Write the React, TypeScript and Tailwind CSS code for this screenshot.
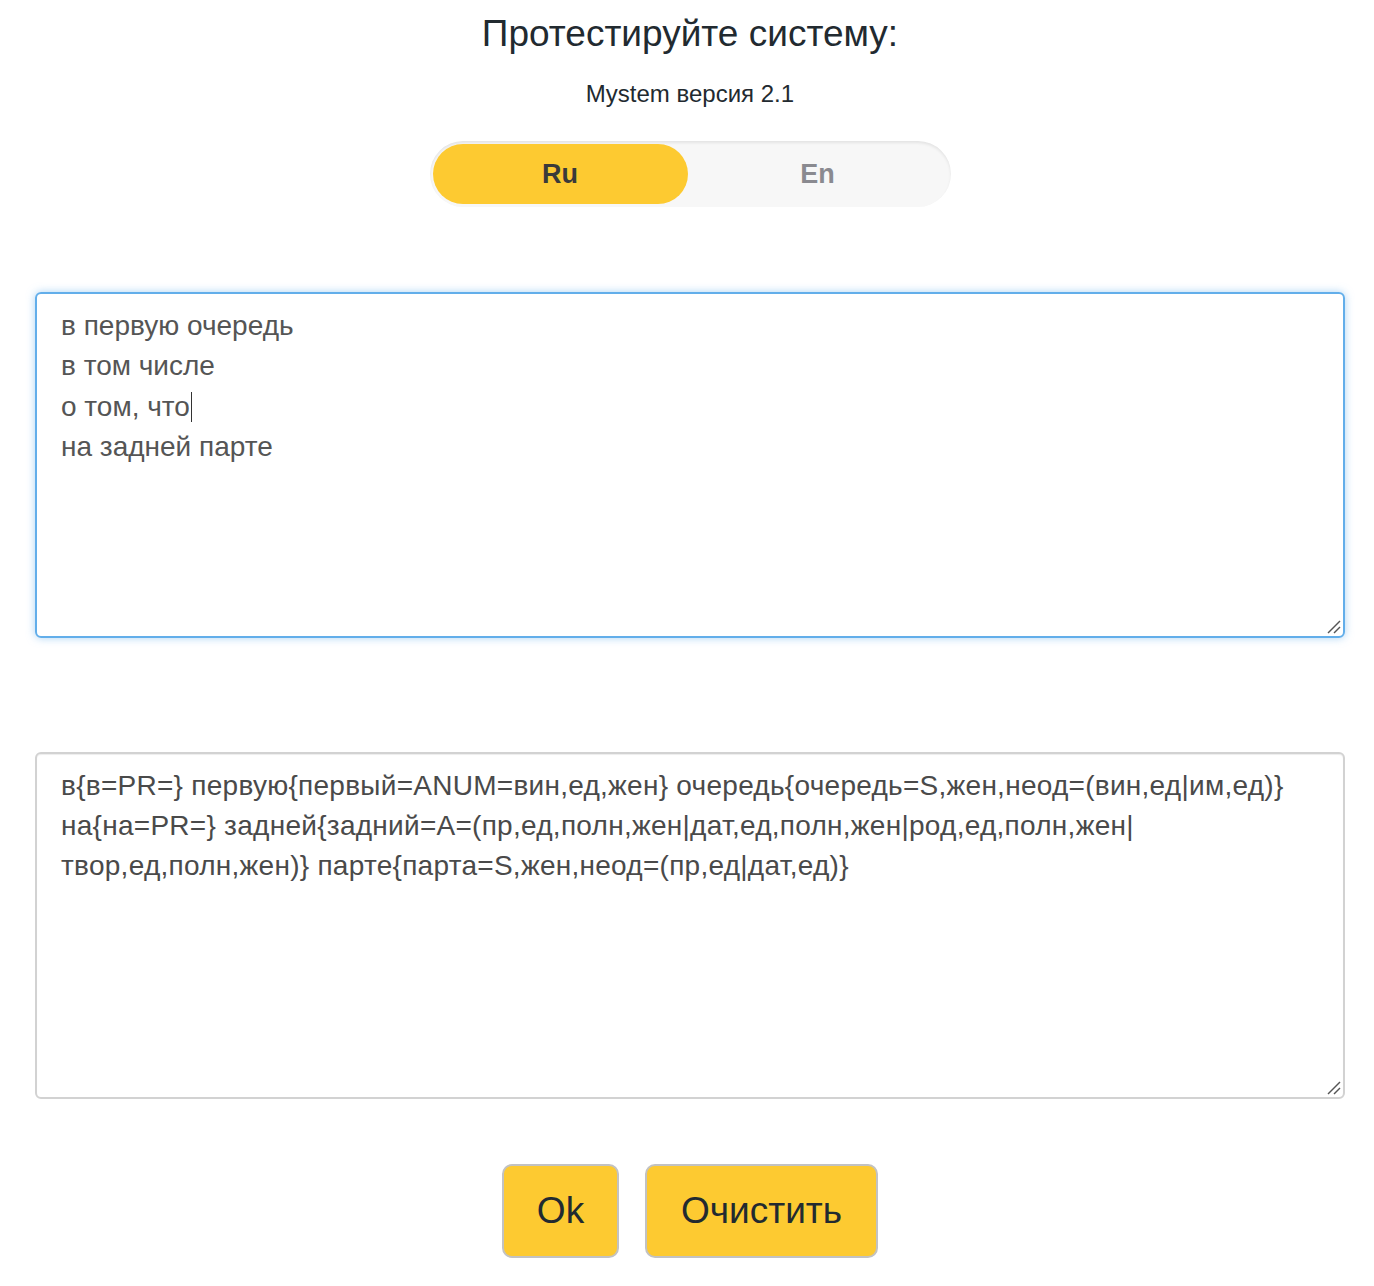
import React from "react";

const outputLines = [
  "в{в=PR=} первую{первый=ANUM=вин,ед,жен} очередь{очередь=S,жен,неод=(вин,ед|им,ед)}",
  "на{на=PR=} задней{задний=A=(пр,ед,полн,жен|дат,ед,полн,жен|род,ед,полн,жен|",
  "твор,ед,полн,жен)} парте{парта=S,жен,неод=(пр,ед|дат,ед)}",
];

function Grip() {
  return (
    <svg
      className="absolute bottom-[2px] right-[2px]"
      width="14"
      height="14"
      viewBox="0 0 14 14"
    >
      <line x1="1" y1="13" x2="13" y2="1" stroke="#555" strokeWidth="1.4" />
      <line x1="7" y1="13" x2="13" y2="7" stroke="#555" strokeWidth="1.4" />
    </svg>
  );
}

export default function App() {
  return (
    <div className="min-h-screen bg-white font-['Liberation_Sans',Arial,sans-serif] text-[#222a30]">
      <div className="flex flex-col items-center pl-[6px] pt-[14px]">
        <h1 className="text-[37px] leading-[40px]">Протестируйте систему:</h1>
        <p className="mt-[26px] text-[24px] leading-[28px]">Mystem версия 2.1</p>
        <div className="mt-[33px] flex h-[66px] w-[521px] rounded-full bg-[#f7f7f7] p-[3px] shadow-[inset_0_2px_3px_rgba(0,0,0,0.08)]">
          <button className="flex w-[255px] items-center justify-center rounded-full bg-[#fdca31] text-[27px] font-bold text-[#3a3a3a]">
            Ru
          </button>
          <button className="flex flex-1 items-center justify-center rounded-full text-[27px] font-bold text-[#8a8a90]">
            En
          </button>
        </div>
      </div>
      <div className="mt-[85px] pl-[35px] pr-[29px]">
        <div className="relative h-[346px] w-full rounded-[6px] border-2 border-[#62aeea] px-[24px] py-[12px] text-[28px] leading-[40px] text-[#555] shadow-[0_0_8px_rgba(102,175,233,0.55)]">
          <div>в первую очередь</div>
          <div>в том числе</div>
          <div>
            о том, что
            <span className="ml-px inline-block h-[30px] w-[1.5px] translate-y-[6px] bg-[#333]" />
          </div>
          <div>на задней парте</div>
          <Grip />
        </div>
        <div className="relative mt-[114px] h-[347px] w-full rounded-[6px] border-2 border-[#d2d2d2] px-[24px] py-[12px] text-[28px] leading-[40px] tracking-[0.27px] text-[#4a4a4a] shadow-[inset_0_1px_1px_rgba(0,0,0,0.075)]">
          {outputLines.map((l) => (
            <div key={l} className="whitespace-nowrap">
              {l}
            </div>
          ))}
          <Grip />
        </div>
      </div>
      <div className="mt-[65px] flex justify-center gap-[26px] pl-[6px]">
        <button className="h-[94px] w-[117px] rounded-[10px] border-2 border-[#c2c2c2] bg-[#fdca31] text-[37px] text-[#222a30]">
          Ok
        </button>
        <button className="h-[94px] w-[233px] rounded-[10px] border-2 border-[#c2c2c2] bg-[#fdca31] text-[37px] text-[#222a30]">
          Очистить
        </button>
      </div>
    </div>
  );
}
